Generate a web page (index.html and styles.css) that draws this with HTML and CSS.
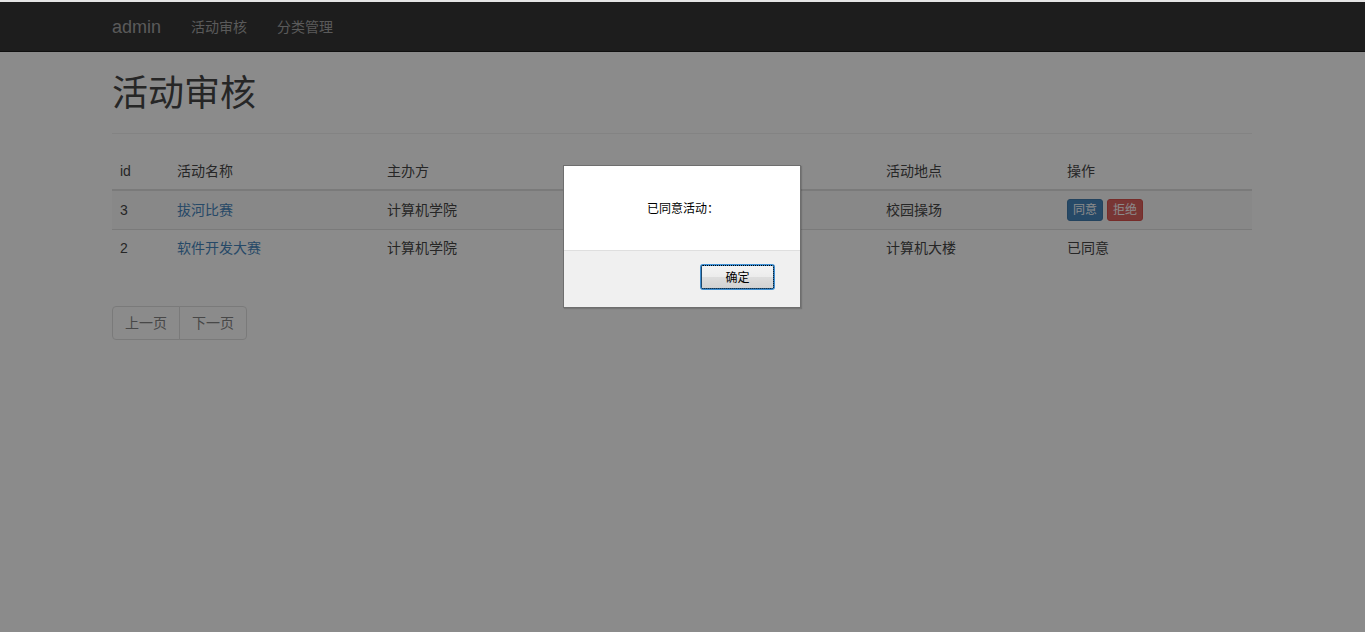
FILE: index.html
```html
<!DOCTYPE html>
<html lang="zh-CN">
<head>
<meta charset="utf-8">
<title>活动审核</title>
<link rel="stylesheet" href="styles.css">
</head>
<body>
<div class="topstrip"></div>
<nav class="navbar">
  <div class="container nav-inner">
    <a class="brand" href="#">admin</a>
    <ul class="nav">
      <li><a href="#">活动审核</a></li>
      <li><a href="#">分类管理</a></li>
    </ul>
  </div>
</nav>

<main class="container">
  <div class="page-header">
    <h1>活动审核</h1>
  </div>

  <table class="table">
    <colgroup>
      <col class="c-id">
      <col class="c-name">
      <col class="c-org">
      <col class="c-time">
      <col class="c-place">
      <col class="c-op">
    </colgroup>
    <thead>
      <tr>
        <th>id</th>
        <th>活动名称</th>
        <th>主办方</th>
        <th></th>
        <th>活动地点</th>
        <th>操作</th>
      </tr>
    </thead>
    <tbody>
      <tr class="odd">
        <td>3</td>
        <td><a href="#">拔河比赛</a></td>
        <td>计算机学院</td>
        <td></td>
        <td>校园操场</td>
        <td><span class="btn btn-primary">同意</span> <span class="btn btn-danger">拒绝</span></td>
      </tr>
      <tr>
        <td>2</td>
        <td><a href="#">软件开发大赛</a></td>
        <td>计算机学院</td>
        <td></td>
        <td>计算机大楼</td>
        <td>已同意</td>
      </tr>
    </tbody>
  </table>

  <ul class="pagination">
    <li class="first"><a href="#">上一页</a></li>
    <li class="last"><a href="#">下一页</a></li>
  </ul>
</main>

<div class="overlay"></div>

<div class="dialog">
  <div class="dialog-body">已同意活动：</div>
  <div class="dialog-footer">
    <button class="dialog-btn">确定</button>
  </div>
</div>
</body>
</html>
```

FILE: styles.css
```css
* { box-sizing: border-box; }

html, body {
  margin: 0;
  padding: 0;
  height: 100%;
}

body {
  font-family: "Liberation Sans", "Noto Sans CJK SC", sans-serif;
  font-size: 14px;
  line-height: 1.42857;
  color: #333;
  background: #fff;
}

.topstrip {
  height: 2px;
  background: #e4e4e4;
}

.container {
  width: 1170px;
  padding: 0 15px;
  margin-left: calc((100% - 1171px) / 2);
}

/* navbar */
.navbar {
  height: 50px;
  background: #222;
  border-bottom: 1px solid #080808;
}

.nav-inner {
  display: flex;
  align-items: stretch;
  height: 49px;
  padding-top: 2px;
}

.brand {
  margin-left: -15px;
  padding: 0 15px;
  font-size: 18px;
  line-height: 47px;
  color: #9d9d9d;
  text-decoration: none;
}

.nav {
  display: flex;
  list-style: none;
  margin: 0;
  padding: 0;
}

.nav a {
  display: block;
  padding: 0 15px;
  line-height: 47px;
  color: #9d9d9d;
  text-decoration: none;
}

/* header */
.page-header {
  padding-bottom: 9px;
  border-bottom: 1px solid #eee;
}

.page-header h1 {
  margin: 22px 0 10px;
  font-size: 36px;
  font-weight: 400;
  line-height: 1.1;
}

/* table */
.table {
  width: 100%;
  table-layout: fixed;
  border-collapse: collapse;
  margin: 19px 0 0;
}

.c-id { width: 57px; }
.c-name { width: 210px; }
.c-org { width: 219px; }
.c-time { width: 280px; }
.c-place { width: 181px; }
.c-op { width: 193px; }

.table th,
.table td {
  padding: 8px;
  text-align: left;
  vertical-align: middle;
  line-height: 20px;
}

.table th {
  font-weight: normal;
  border-bottom: 2px solid #ddd;
}

.table td {
  border-top: 1px solid #ddd;
}

.table tr.odd td {
  background: #f9f9f9;
}

.table a {
  color: #337ab7;
  text-decoration: none;
}

.btn {
  display: inline-block;
  padding: 1px 5px;
  font-size: 12px;
  line-height: 18px;
  border-radius: 3px;
  border: 1px solid transparent;
  color: #fff;
  vertical-align: middle;
}

.btn-primary {
  background: #337ab7;
  border-color: #2e6da4;
}

.btn-danger {
  background: #d9534f;
  border-color: #d43f3a;
}

/* pagination */
.pagination {
  display: flex;
  list-style: none;
  margin: 40px 0 20px;
  padding: 0;
}

.pagination a {
  display: block;
  padding: 6px 12px;
  line-height: 20px;
  color: #777;
  text-decoration: none;
  border: 1px solid #ddd;
  background: #fff;
}

.pagination .first a {
  border-radius: 4px 0 0 4px;
}

.pagination .last a {
  margin-left: -1px;
  border-radius: 0 4px 4px 0;
}

/* modal overlay */
.overlay {
  position: fixed;
  top: 2px;
  left: 0;
  right: 0;
  bottom: 0;
  background: rgba(26, 26, 26, 0.507);
}

.dialog {
  position: absolute;
  left: 563px;
  top: 165px;
  width: 238px;
  height: 143px;
  display: flex;
  flex-direction: column;
  border: 1px solid #6e6e6e;
  background: #fff;
  box-shadow: 1px 1px 1px rgba(0, 0, 0, 0.15);
  font-family: "Noto Sans CJK SC", "Liberation Sans", sans-serif;
  font-size: 12px;
  color: #000;
}

.dialog-body {
  height: 84px;
  display: flex;
  align-items: center;
  justify-content: center;
  background: #fff;
  padding-left: 2px;
}

.dialog-footer {
  flex: 1;
  display: flex;
  justify-content: flex-end;
  align-items: flex-start;
  padding: 14px 26px 0 0;
  background: #f0f0f0;
  border-top: 1px solid #dfdfdf;
}

.dialog-btn {
  width: 73px;
  height: 24px;
  padding: 0;
  font-family: "Noto Sans CJK SC", "Liberation Sans", sans-serif;
  font-size: 12px;
  line-height: 20px;
  color: #000;
  border: 1px dotted #000;
  border-radius: 2px;
  box-shadow: 0 0 0 1px #3f8fd2;
  background-clip: padding-box;
  background-color: #e6e6e6;
  background-image: linear-gradient(#f3f3f3 0%, #ececec 48%, #dddddd 52%, #d2d2d2 100%);
}
```
